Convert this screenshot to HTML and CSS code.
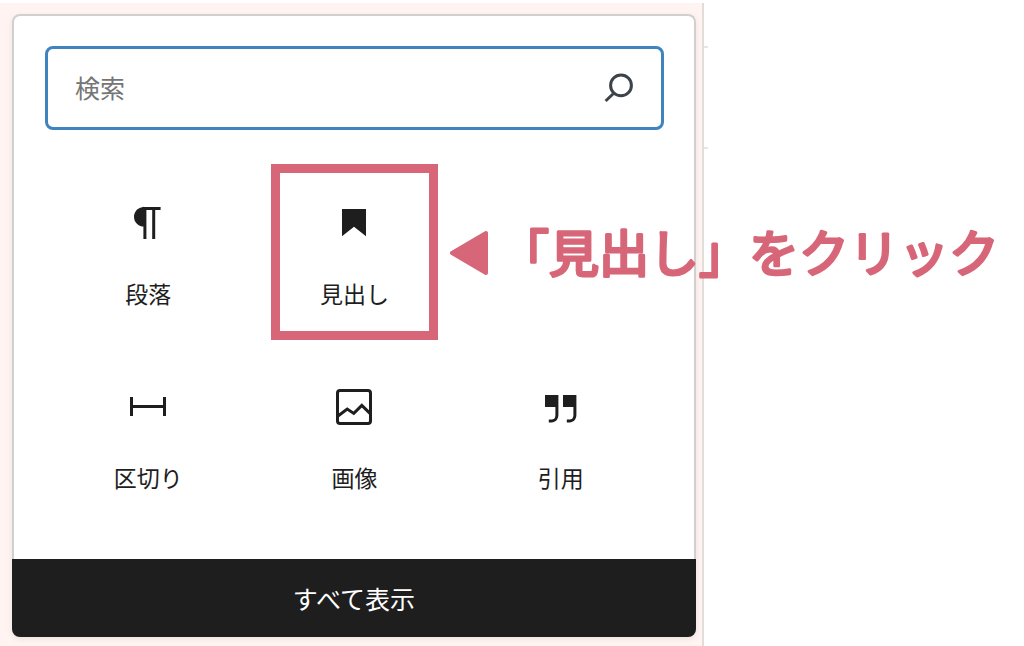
FILE: index.html
```html
<!DOCTYPE html>
<html lang="ja">
    <head>
        <title>ブロックを追加</title>
        <meta charset="UTF-8">
        <meta name="viewport" content="width=device-width, initial-scale=1.0">
        <link rel="stylesheet" href="styles.css">
    </head>
    <body>
        <div class="page">
            <div class="editor">
                <div class="inserter">
                    <div class="inserter-body">
                        <form class="search">
                            <input class="search-input" type="search" aria-label="検索" placeholder="検索">
                            <button class="search-btn" type="submit" aria-label="検索">
                                <svg class="icon" viewBox="0 0 24 24" fill="none" stroke="currentColor" stroke-width="1.5">
                                    <circle cx="13.5" cy="11.2" r="5.2"/>
                                    <path d="M10 15l-4.200 4"/>
                                </svg>
                            </button>
                        </form>
                        <ul class="blocks">
                            <li class="block">
                                <button class="block-btn" type="button">
                                    <svg class="icon" viewBox="0 0 24 24" fill="currentColor"><path d="M18.3 4H9.900v-.1l-.9.2c-2.300.4-4 2.400-4 4.800s1.700 4.400 4 4.800l.7.1V20h1.500V5.500h2.900V20h1.500V5.500h2.700V4z"/></svg>
                                    <span>段落</span>
                                </button>
                            </li>
                            <li class="block">
                                <button class="block-btn" type="button">
                                    <svg class="icon" viewBox="0 0 24 24" fill="currentColor"><path d="M6 5v13.600l6-4.700 6 4.700V5z"/></svg>
                                    <span>見出し</span>
                                </button>
                                <div class="marker">
                                    <svg class="callout" viewBox="0 0 560 80" fill="currentColor" stroke="currentColor" stroke-linejoin="round">
                                        <path stroke-width="4" d="M3 40L37 20v40z"/>
                                        <text class="callout-text" x="50" y="59">「見出し」をクリック</text>
                                    </svg>
                                </div>
                            </li>
                            <li class="block"></li>
                            <li class="block">
                                <button class="block-btn" type="button">
                                    <svg class="icon" viewBox="0 0 24 24" fill="currentColor"><path d="M4.500 12.500v4H3V7h1.500v4h15V7H21v9.500h-1.500v-4h-15z"/></svg>
                                    <span>区切り</span>
                                </button>
                            </li>
                            <li class="block">
                                <button class="block-btn" type="button">
                                    <svg class="icon" viewBox="0 0 24 24" fill="none" stroke="currentColor" stroke-width="1.5"><rect x="3.750" y="3.750" width="16.500" height="16.500" rx="1.300"/><path d="M4 16.500L8.600 13l3.300 2.200 4-4 4.100 4"/></svg>
                                    <span>画像</span>
                                </button>
                            </li>
                            <li class="block">
                                <button class="block-btn" type="button">
                                    <svg class="icon" viewBox="0 0 24 24" fill="currentColor"><path d="M13 6v6h5.200v4c0 .8-.2 1.400-.5 1.700-.6.6-1.600.6-2.500.5h-.3v1.500h.5c1 0 2.300-.1 3.300-1 .6-.6 1-1.600 1-2.800V6H13zm-9 6h5.200v4c0 .8-.2 1.400-.5 1.700-.6.6-1.600.6-2.500.5h-.3v1.500h.5c1 0 2.300-.1 3.300-1 .6-.6 1-1.600 1-2.800V6H4v6z"/></svg>
                                    <span>引用</span>
                                </button>
                            </li>
                        </ul>
                    </div>
                    <button class="show-all" type="button">すべて表示</button>
                </div>
            </div>
            <div class="sidebar">
                <div class="sidebar-row"></div>
            </div>
        </div>
    </body>
</html>
```

FILE: styles.css
```css
*{
    box-sizing: border-box;
}
body{
    margin: 0;
    background-color: white;
    color: #1e1e1e;
    font-family: "Noto Sans CJK JP", sans-serif;
    overflow-x: hidden;
}
button, input{
    font-family: inherit;
    color: inherit;
}
button{
    border: 0;
    padding: 0;
    background: none;
    cursor: pointer;
}
.page{
    display: grid;
    grid-template-columns: 11fr 5fr;
    min-height: 100vh;
    padding-top: 3px;
}
.editor{
    background-color: #fff4f1;
    border-right: 2px solid #e2dcda;
    padding: 11px 6px 9px 12px;
}
.inserter{
    border: 2px solid #d2d0cf;
    border-bottom: 0;
    border-radius: 8px;
    background-color: white;
    box-shadow: 0 2px 6px rgba(0,0,0,0.08);
}
.inserter-body{
    padding: 30px 30px 31px 31px;
}
.search{
    display: flex;
    align-items: center;
    height: 84px;
    margin-bottom: 30px;
    padding: 0 19px 2px 27px;
    border: 3px solid #3f83bf;
    border-radius: 8px;
}
.search-input{
    flex: 1;
    min-width: 0;
    border: 0;
    padding: 0;
    outline: none;
    background: none;
    font-size: 25px;
}
.search-input::placeholder{
    color: #757575;
}
.search-btn{
    color: #3c434a;
}
.icon{
    display: block;
    width: 48px;
    height: 48px;
}
.blocks{
    display: grid;
    grid-template-columns: repeat(3, 1fr);
    grid-auto-rows: 184px;
    margin: 0;
    padding: 0;
    list-style: none;
}
.block{
    position: relative;
}
.block-btn{
    display: flex;
    flex-direction: column;
    align-items: center;
    justify-content: flex-start;
    gap: 28px;
    width: 100%;
    height: 100%;
    padding-top: 39px;
    font-size: 23px;
    line-height: 36px;
}
.marker{
    position: absolute;
    inset: 4px 20px;
    border: 9px solid #d66678;
    pointer-events: none;
}
.callout{
    position: absolute;
    top: 40px;
    left: calc(100% + 20px);
    width: 560px;
    height: 80px;
    color: #d66678;
}
.callout-text{
    font-size: 50px;
    stroke-width: 3px;
}
.show-all{
    display: block;
    width: calc(100% + 4px);
    height: 78px;
    margin: 0 -2px;
    border-radius: 0 0 8px 8px;
    background-color: #1e1e1e;
    color: white;
    font-size: 25px;
}
.sidebar{
    padding-top: 43px;
}
.sidebar-row{
    width: 4px;
    height: 103px;
    border: 2px solid #e8e5e4;
    border-width: 2px 0px;
}
```
